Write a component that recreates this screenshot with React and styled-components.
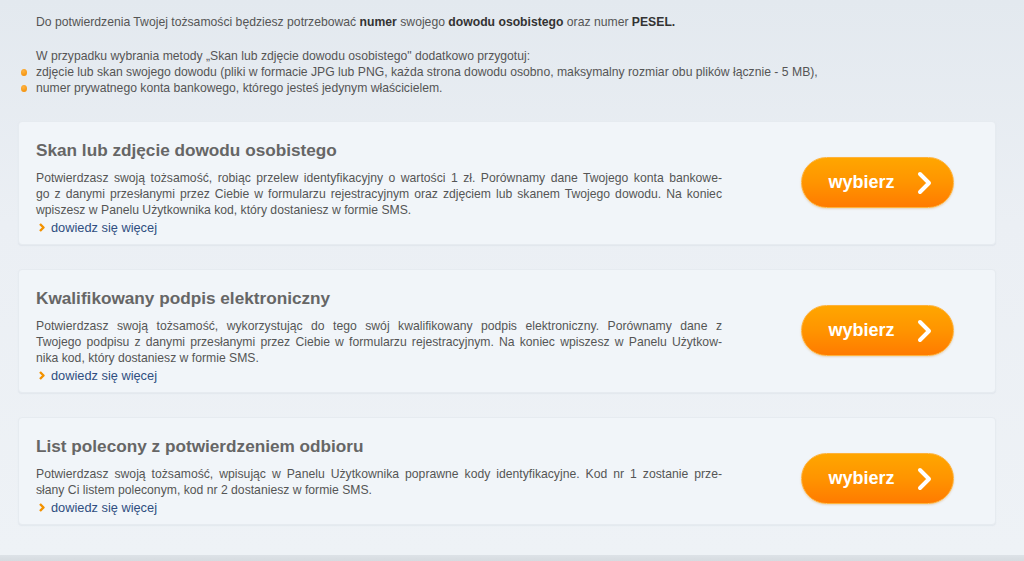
import React from "react";
import styled, { createGlobalStyle } from "styled-components";

const GlobalStyle = createGlobalStyle`
  html, body {
    margin: 0;
    padding: 0;
  }
  body {
    font-family: "Liberation Sans", Arial, sans-serif;
    background: #e9eef3;
  }
`;

const Page = styled.div`
  box-sizing: border-box;
  height: 555px;
  padding: 14px 28px 0 18px;
  background: linear-gradient(to bottom, #e3e9ef 0%, #ebeff4 40%, #eef2f6 100%);
  overflow: hidden;
`;

const Intro = styled.div`
  padding-left: 18px;
  font-size: 12.2px;
  line-height: 16px;
  color: #555;
`;

const Para = styled.p`
  margin: 0 0 18px 0;

  b {
    color: #333;
  }
`;

const BulletList = styled.ul`
  list-style: none;
  margin: 0;
  padding: 0;
`;

const Bullet = styled.li`
  position: relative;

  &::before {
    content: "";
    position: absolute;
    left: -15px;
    top: 5px;
    width: 6px;
    height: 7px;
    border-radius: 50%;
    background: radial-gradient(circle at 40% 30%, #ffb340, #f08a00);
  }
`;

const CardList = styled.div`
  display: flex;
  flex-direction: column;
  gap: 24px;
  margin-top: 25px;
`;

const Card = styled.section`
  display: flex;
  justify-content: space-between;
  align-items: flex-start;
  padding: 18px 41px 8px 17px;
  background: #f1f5f9;
  border: 1px solid #e6ebf0;
  border-radius: 4px;
  box-shadow: 0 1px 1px rgba(150, 165, 180, 0.12);
`;

const Content = styled.div`
  width: 686px;
`;

const Title = styled.h2`
  margin: 0 0 10px 0;
  font-size: 17.2px;
  line-height: 20px;
  font-weight: bold;
  color: #666;
`;

const Line = styled.span`
  display: block;
  font-size: 12.2px;
  line-height: 16px;
  color: #555;
  text-align: ${(p) => (p.$last ? "left" : "justify")};
  text-align-last: ${(p) => (p.$last ? "left" : "justify")};
`;

const MoreLink = styled.a`
  display: inline-flex;
  align-items: center;
  gap: 6px;
  margin-top: 1px;
  padding-left: 3px;
  font-size: 12.8px;
  line-height: 16px;
  color: #2f4e80;
  text-decoration: none;
  cursor: pointer;
`;

const Button = styled.button`
  display: flex;
  align-items: center;
  justify-content: center;
  gap: 22px;
  width: 153px;
  height: 51px;
  margin-top: 17px;
  padding: 0 0 0 6px;
  border: 1px solid #ffb23a;
  border-radius: 26px;
  background: linear-gradient(to bottom, #ffa600 0%, #ff9400 50%, #ff7b00 100%);
  box-shadow: 0 1px 2px rgba(200, 110, 0, 0.25);
  color: #fff;
  font-family: "Liberation Sans", Arial, sans-serif;
  font-size: 18px;
  font-weight: bold;
  cursor: pointer;
`;

const Footer = styled.div`
  height: 6px;
  background: linear-gradient(to bottom, #dde2e7, #d6dbe0);
`;

const SmallChevron = () => (
  <svg width="6" height="9" viewBox="0 0 6 9">
    <path d="M1 1 L4.5 4.5 L1 8" fill="none" stroke="#f39200" strokeWidth="2.4" strokeLinejoin="round" />
  </svg>
);

const BigChevron = () => (
  <svg width="16" height="24" viewBox="0 0 16 24">
    <path d="M3 3 L12 12 L3 21" fill="none" stroke="#fff" strokeWidth="4" strokeLinecap="round" strokeLinejoin="round" />
  </svg>
);

const methods = [
  {
    title: "Skan lub zdjęcie dowodu osobistego",
    lines: [
      "Potwierdzasz swoją tożsamość, robiąc przelew identyfikacyjny o wartości 1 zł. Porównamy dane Twojego konta bankowe-",
      "go z danymi przesłanymi przez Ciebie w formularzu rejestracyjnym oraz zdjęciem lub skanem Twojego dowodu. Na koniec",
      "wpiszesz w Panelu Użytkownika kod, który dostaniesz w formie SMS.",
    ],
  },
  {
    title: "Kwalifikowany podpis elektroniczny",
    lines: [
      "Potwierdzasz swoją tożsamość, wykorzystując do tego swój kwalifikowany podpis elektroniczny. Porównamy dane z",
      "Twojego podpisu z danymi przesłanymi przez Ciebie w formularzu rejestracyjnym. Na koniec wpiszesz w Panelu Użytkow-",
      "nika kod, który dostaniesz w formie SMS.",
    ],
  },
  {
    title: "List polecony z potwierdzeniem odbioru",
    lines: [
      "Potwierdzasz swoją tożsamość, wpisując w Panelu Użytkownika poprawne kody identyfikacyjne. Kod nr 1 zostanie prze-",
      "słany Ci listem poleconym, kod nr 2 dostaniesz w formie SMS.",
    ],
  },
];

const MethodCard = ({ title, lines }) => (
  <Card>
    <Content>
      <Title>{title}</Title>
      {lines.map((l, i) => (
        <Line key={i} $last={i === lines.length - 1}>
          {l}
        </Line>
      ))}
      <MoreLink>
        <SmallChevron />
        dowiedz się więcej
      </MoreLink>
    </Content>
    <Button>
      wybierz
      <BigChevron />
    </Button>
  </Card>
);

export default function App() {
  return (
    <>
      <GlobalStyle />
      <Page>
        <Intro>
          <Para>
            Do potwierdzenia Twojej tożsamości będziesz potrzebować <b>numer</b> swojego{" "}
            <b>dowodu osobistego</b> oraz numer <b>PESEL.</b>
          </Para>
          <div>W przypadku wybrania metody „Skan lub zdjęcie dowodu osobistego" dodatkowo przygotuj:</div>
          <BulletList>
            <Bullet>
              zdjęcie lub skan swojego dowodu (pliki w formacie JPG lub PNG, każda strona dowodu osobno,
              maksymalny rozmiar obu plików łącznie - 5 MB),
            </Bullet>
            <Bullet>numer prywatnego konta bankowego, którego jesteś jedynym właścicielem.</Bullet>
          </BulletList>
        </Intro>
        <CardList>
          {methods.map((m) => (
            <MethodCard key={m.title} {...m} />
          ))}
        </CardList>
      </Page>
      <Footer />
    </>
  );
}
